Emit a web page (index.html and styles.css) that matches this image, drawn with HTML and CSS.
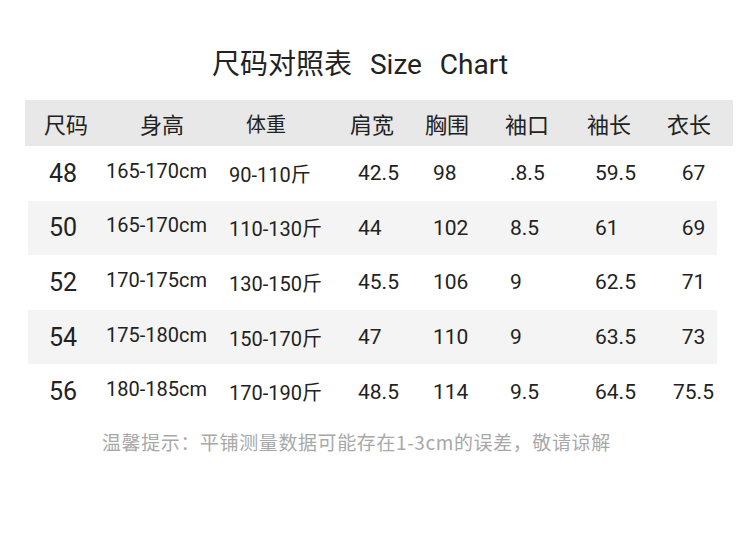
FILE: index.html
```html
<!DOCTYPE html>
<html lang="zh">
<head>
<meta charset="utf-8">
<link rel="stylesheet" href="styles.css">
</head>
<body>
<div class="page">
  <h1 class="title">尺码对照表 Size Chart</h1>
  <div class="chart">
    <div class="row head">
      <div class="c c1">尺码</div><div class="c c2">身高</div><div class="c c3">体重</div><div class="c c4">肩宽</div><div class="c c5">胸围</div><div class="c c6">袖口</div><div class="c c7">袖长</div><div class="c c8">衣长</div>
    </div>
    <div class="row data">
      <div class="c c1 size">48</div><div class="c c2 ht">165-170cm</div><div class="c c3">90-110斤</div><div class="c c4">42.5</div><div class="c c5">98</div><div class="c c6">.8.5</div><div class="c c7">59.5</div><div class="c c8">67</div>
    </div>
    <div class="row data stripe">
      <div class="c c1 size">50</div><div class="c c2 ht">165-170cm</div><div class="c c3">110-130斤</div><div class="c c4">44</div><div class="c c5">102</div><div class="c c6">8.5</div><div class="c c7">61</div><div class="c c8">69</div>
    </div>
    <div class="row data">
      <div class="c c1 size">52</div><div class="c c2 ht">170-175cm</div><div class="c c3">130-150斤</div><div class="c c4">45.5</div><div class="c c5">106</div><div class="c c6">9</div><div class="c c7">62.5</div><div class="c c8">71</div>
    </div>
    <div class="row data stripe">
      <div class="c c1 size">54</div><div class="c c2 ht">175-180cm</div><div class="c c3">150-170斤</div><div class="c c4">47</div><div class="c c5">110</div><div class="c c6">9</div><div class="c c7">63.5</div><div class="c c8">73</div>
    </div>
    <div class="row data">
      <div class="c c1 size">56</div><div class="c c2 ht">180-185cm</div><div class="c c3">170-190斤</div><div class="c c4">48.5</div><div class="c c5">114</div><div class="c c6">9.5</div><div class="c c7">64.5</div><div class="c c8">75.5</div>
    </div>
  </div>
  <p class="note">温馨提示：平铺测量数据可能存在1-3cm的误差，敬请谅解</p>
</div>
</body>
</html>
```
FILE: styles.css
```css
html, body {
  margin: 0;
  padding: 0;
  background: #ffffff;
}
.page {
  width: 750px;
  height: 536px;
  padding-top: 45px;
  box-sizing: border-box;
  font-family: Roboto, "Noto Sans CJK SC", sans-serif;
  color: #222222;
}
.title {
  margin: 0;
  padding-left: 212px;
  font-family: Roboto, "Noto Sans CJK SC", sans-serif;
  font-weight: 400;
  font-size: 28px;
  line-height: 40px;
  word-spacing: 11px;
}
.chart {
  margin-top: 15px;
  margin-left: 25px;
  width: 708px;
}
.row {
  display: grid;
  grid-template-columns: 75px 125px 120px 80px 75px 85px 75px 73px;
  align-items: center;
}
.head {
  height: 46px;
  background: #e8e8e8;
  font-family: "Noto Sans CJK SC", sans-serif;
  font-size: 22px;
}
.head .c1 { padding-left: 19px; }
.head .c2 { padding-left: 40px; }
.head .c3 { padding-left: 21px; }
.head .c4 { padding-left: 5px; }
.head .c5 { padding-left: 0; }
.head .c6 { padding-left: 5px; }
.head .c7 { padding-left: 2px; }
.head .c8 { padding-left: 7px; }
.data {
  height: 54.6px;
  font-size: 21px;
}
.stripe {
  background: linear-gradient(to right, transparent 3px, #f4f4f4 3px, #f4f4f4 692px, transparent 692px);
}
.data .c1 { padding-left: 24px; }
.data .c2 { padding-left: 6px; }
.data .c3 { padding-left: 4px; }
.data .c4 { padding-left: 13px; }
.data .c5 { padding-left: 8px; }
.data .c6 { padding-left: 10px; }
.data .c7 { padding-left: 10px; }
.data .c8 { text-align: center; padding-right: 6px; }
.size {
  font-size: 25px;
  font-weight: 400;
}
.ht {
  font-size: 20px;
  padding-bottom: 5px;
}
.c3 { font-size: 20px; }
.note {
  margin: 8px 0 0 102px;
  font-family: "Noto Sans CJK SC", sans-serif;
  font-size: 19px;
  letter-spacing: 0.6px;
  line-height: 30px;
  color: #a8a8a8;
}
```
